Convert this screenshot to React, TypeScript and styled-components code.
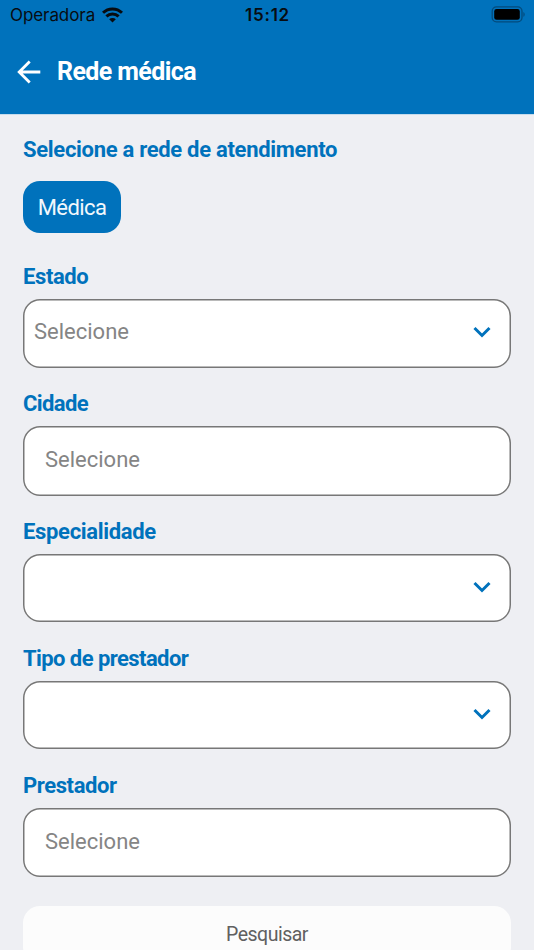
import React from 'react';
import styled, { createGlobalStyle } from 'styled-components';

const BLUE = '#0072bc';

const GlobalStyle = createGlobalStyle`
  *, *::before, *::after { box-sizing: border-box; }
  html, body { margin: 0; height: 100%; overflow: hidden; background: #eeeff3; }
  body { font-family: Roboto, 'Liberation Sans', sans-serif; }
  #root { height: 100%; }
`;

const Screen = styled.div`
  display: flex;
  flex-direction: column;
  width: 100%;
  height: 950px;
  overflow: hidden;
  background: #eeeff3;
`;

const Header = styled.header`
  flex: none;
  height: 115px;
  background: ${BLUE};
  border-bottom: 1px solid #c5dbec;
`;

const StatusBar = styled.div`
  display: grid;
  grid-template-columns: 1fr auto 1fr;
  align-items: center;
  height: 30px;
  padding: 0 9px 0 10px;
  font-family: Inter, sans-serif;
  color: #080c10;
`;

const Carrier = styled.span`
  display: flex;
  align-items: center;
  gap: 7px;
  font-size: 17px;
  letter-spacing: -0.08px;
`;

const Clock = styled.time`
  font-size: 17px;
  font-weight: 600;
  letter-spacing: 0.75px;
`;

const Battery = styled.svg`
  justify-self: end;
  margin-top: -2px;
`;

const TitleBar = styled.div`
  display: flex;
  align-items: center;
  gap: 16px;
  height: 83px;
  padding-left: 17px;
`;

const Back = styled.button`
  display: flex;
  padding: 0;
  border: 0;
  background: none;
  color: #fff;
`;

const Title = styled.h1`
  margin: 0;
  color: #fff;
  font-size: 25px;
  font-weight: 700;
  letter-spacing: -0.6px;
`;

const Content = styled.main`
  display: flex;
  flex-direction: column;
  padding: 19.5px 23px 0;
`;

const Label = styled.label<{ $tracking: number }>`
  align-self: flex-start;
  height: 30px;
  margin: 0;
  line-height: 31px;
  color: ${BLUE};
  font-size: 22px;
  font-weight: 700;
  letter-spacing: ${(p) => p.$tracking}px;
  white-space: nowrap;
`;

const SectionTitle = styled.h2`
  height: 30px;
  margin: 0;
  line-height: 30px;
  color: ${BLUE};
  font-size: 22px;
  font-weight: 700;
  letter-spacing: -0.3px;
`;

const Chip = styled.button`
  align-self: flex-start;
  width: 98px;
  height: 52.5px;
  margin: 16px 0 28px;
  padding: 1px 0 0;
  border: 0;
  border-radius: 17px;
  background: ${BLUE};
  color: #f2f8fc;
  font: 400 22px Roboto, sans-serif;
  letter-spacing: -0.6px;
`;

const Field = styled.div<{ $text?: boolean }>`
  display: flex;
  flex-direction: column;
  height: ${(p) => (p.$text ? 128.1 : 126.9)}px;
`;

const Box = styled.div<{ $text?: boolean }>`
  display: flex;
  align-items: center;
  justify-content: space-between;
  height: ${(p) => (p.$text ? 69.7 : 68.5)}px;
  margin-top: 8px;
  padding: ${(p) => (p.$text ? '0 18px 2px 22px' : '0 20px 3px 11px')};
  border-radius: 17px;
  background: #fff;
  box-shadow: inset 0 0 0 1.5px #777;
`;

const Placeholder = styled.span`
  color: #858585;
  font-size: 22px;
  font-weight: 400;
  letter-spacing: 0;
`;

const Arrow = styled.svg`
  margin: 1px 0 0 auto;
`;

const Search = styled.button`
  flex: none;
  height: 58px;
  margin-top: 8px;
  padding: 0 0 1px;
  border: 0;
  border-radius: 17px;
  background: #fcfcfc;
  color: #606060;
  font: 400 19.5px Roboto, sans-serif;
  letter-spacing: -0.5px;
`;

type FieldSpec = { label: string; tracking: number; placeholder?: string; text?: boolean };

const fields: FieldSpec[] = [
  { label: 'Estado', tracking: -0.4, placeholder: 'Selecione' },
  { label: 'Cidade', tracking: -0.6, placeholder: 'Selecione', text: true },
  { label: 'Especialidade', tracking: -0.32 },
  { label: 'Tipo de prestador', tracking: -0.57 },
  { label: 'Prestador', tracking: -0.4, placeholder: 'Selecione', text: true },
];

export default function App() {
  return (
    <>
      <GlobalStyle />
      <Screen>
        <Header>
          <StatusBar>
            <Carrier>
              Operadora
              <svg width="21" height="16" viewBox="0 0 21 16" fill="none" stroke="currentColor" strokeWidth="3">
                <path d="M1 5.8a13.6 13.6 0 0 1 19 0" />
                <path d="M4.4 9.4a8.7 8.7 0 0 1 12.2 0" />
                <path d="M10.5 15.6 7.2 12.3a4.7 4.7 0 0 1 6.600 0Z" fill="currentColor" stroke="none" />
              </svg>
            </Carrier>
            <Clock>15:12</Clock>
            <Battery width="34" height="17" viewBox="0 0 34 17">
              <rect x="1.2" y=".9" width="29.8" height="15" rx="4.3" fill="none" stroke="#034b7c" strokeWidth="1.3" />
              <rect x="3.2" y="3" width="25.6" height="10.8" rx="2.4" fill="#000" />
              <path d="M32.4 6v4.8c1.7-.7 1.7-4.1 0-4.8Z" fill="#034b7c" />
            </Battery>
          </StatusBar>
          <TitleBar>
            <Back aria-label="Voltar">
              <svg width="24" height="24" viewBox="0 0 24 24" fill="none" stroke="currentColor" strokeWidth="2.8">
                <path d="M23.3 12H2.5M12.7 1.5 2.2 12l10.5 10.5" />
              </svg>
            </Back>
            <Title>Rede médica</Title>
          </TitleBar>
        </Header>
        <Content>
          <SectionTitle>Selecione a rede de atendimento</SectionTitle>
          <Chip>Médica</Chip>
          {fields.map((f) => (
            <Field key={f.label} $text={f.text}>
              <Label $tracking={f.tracking}>{f.label}</Label>
              <Box $text={f.text}>
                {f.placeholder && <Placeholder>{f.placeholder}</Placeholder>}
                {!f.text && (
                  <Arrow width="18" height="12" viewBox="0 0 18 12" fill="none" stroke={BLUE} strokeWidth="3">
                    <path d="m1.5 2 7.5 7.5L16.5 2" />
                  </Arrow>
                )}
              </Box>
            </Field>
          ))}
          <Search>Pesquisar</Search>
        </Content>
      </Screen>
    </>
  );
}
